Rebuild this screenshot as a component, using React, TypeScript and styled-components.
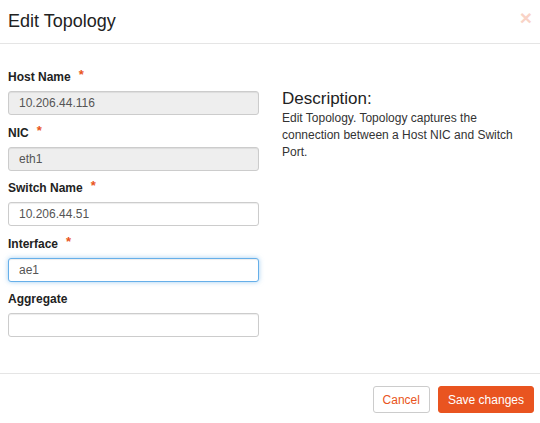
import React from "react";
import styled, { createGlobalStyle, css } from "styled-components";

const GlobalStyle = createGlobalStyle`
  html, body {
    margin: 0;
    padding: 0;
    background: #ffffff;
  }
  body {
    font-family: "Liberation Sans", Arial, Helvetica, sans-serif;
    font-size: 12px;
    line-height: 1.42857;
    color: #333333;
  }
  * { box-sizing: border-box; }
`;

const ACCENT = "#e95420";

const Dialog = styled.div`
  width: 540px;
  height: 423px;
  display: flex;
  flex-direction: column;
  background: #ffffff;
`;

const Header = styled.div`
  height: 44px;
  display: flex;
  align-items: flex-start;
  justify-content: space-between;
  padding: 11px 8px 0 8px;
  border-bottom: 1px solid #e5e5e5;
`;

const Title = styled.h3`
  margin: 0;
  font-size: 18px;
  line-height: 20px;
  font-weight: normal;
  color: #222222;
`;

const Close = styled.button`
  border: 0;
  background: none;
  padding: 0;
  margin: -4px 0 0 0;
  font-family: "Liberation Sans", Arial, sans-serif;
  font-size: 21px;
  font-weight: bold;
  line-height: 1;
  color: ${ACCENT};
  opacity: 0.25;
  cursor: pointer;
`;

const Body = styled.div`
  flex: 1;
  display: grid;
  grid-template-columns: 251px 251px;
  column-gap: 23px;
  align-items: start;
  padding: 25px 8px 0 8px;
`;

const Form = styled.div`
  display: flex;
  flex-direction: column;
`;

const Group = styled.div`
  display: flex;
  flex-direction: column;
  align-items: flex-start;
  margin-bottom: 9.5px;
`;

const Label = styled.label`
  display: block;
  height: 17px;
  margin-bottom: 5px;
  font-weight: bold;
  font-size: 12px;
  line-height: 17px;
  color: #222222;
`;

const Required = styled.span`
  color: ${ACCENT};
  font-size: 13px;
  line-height: 0;
  margin-left: 8px;
  vertical-align: 2px;
`;

const Input = styled.input<{ $focused?: boolean }>`
  width: 100%;
  height: 24px;
  padding: 0 10px;
  font-family: "Liberation Sans", Arial, sans-serif;
  font-size: 12px;
  color: #555555;
  background: #ffffff;
  border: 1px solid #cccccc;
  border-radius: 3px;
  box-shadow: inset 0 1px 1px rgba(0, 0, 0, 0.075);
  outline: none;

  &:disabled {
    background: #eeeeee;
    color: #555555;
    -webkit-text-fill-color: #555555;
    opacity: 1;
  }

  ${(p) =>
    p.$focused &&
    css`
      border-color: #66afe9;
      box-shadow: inset 0 1px 1px rgba(0, 0, 0, 0.075),
        0 0 5px rgba(102, 175, 233, 0.6);
    `}
`;

const Side = styled.div`
  display: flex;
  flex-direction: column;
`;

const SideHeading = styled.h4`
  margin: 20px 0 2px 0;
  font-size: 17px;
  line-height: 19px;
  font-weight: normal;
  color: #222222;
`;

const SideText = styled.p`
  margin: 0;
  font-size: 12px;
  line-height: 17px;
  color: #333333;
`;

const Footer = styled.div`
  height: 50px;
  display: flex;
  justify-content: flex-end;
  align-items: flex-start;
  gap: 8px;
  padding: 12px 6px 0 6px;
  border-top: 1px solid #e5e5e5;
`;

const Button = styled.button<{ $primary?: boolean }>`
  height: 27px;
  padding: 0 9px;
  font-family: "Liberation Sans", Arial, sans-serif;
  font-size: 12px;
  border-radius: 3px;
  cursor: pointer;
  ${(p) =>
    p.$primary
      ? css`
          background: ${ACCENT};
          border: 1px solid ${ACCENT};
          color: #ffffff;
        `
      : css`
          background: #ffffff;
          border: 1px solid #cccccc;
          color: ${ACCENT};
        `}
`;

type Field = {
  label: string;
  value: string;
  required?: boolean;
  disabled?: boolean;
  focused?: boolean;
};

const fields: Field[] = [
  { label: "Host Name", value: "10.206.44.116", required: true, disabled: true },
  { label: "NIC", value: "eth1", required: true, disabled: true },
  { label: "Switch Name", value: "10.206.44.51", required: true },
  { label: "Interface", value: "ae1", required: true, focused: true },
  { label: "Aggregate", value: "" },
];

export default function App() {
  return (
    <>
      <GlobalStyle />
      <Dialog>
        <Header>
          <Title>Edit Topology</Title>
          <Close aria-label="Close">×</Close>
        </Header>
        <Body>
          <Form>
            {fields.map((f) => (
              <Group key={f.label}>
                <Label>
                  {f.label}
                  {f.required && <Required>*</Required>}
                </Label>
                <Input
                  defaultValue={f.value}
                  disabled={f.disabled}
                  $focused={f.focused}
                />
              </Group>
            ))}
          </Form>
          <Side>
            <SideHeading>Description:</SideHeading>
            <SideText>
              Edit Topology. Topology captures the connection between a Host NIC
              and Switch Port.
            </SideText>
          </Side>
        </Body>
        <Footer>
          <Button>Cancel</Button>
          <Button $primary>Save changes</Button>
        </Footer>
      </Dialog>
    </>
  );
}
